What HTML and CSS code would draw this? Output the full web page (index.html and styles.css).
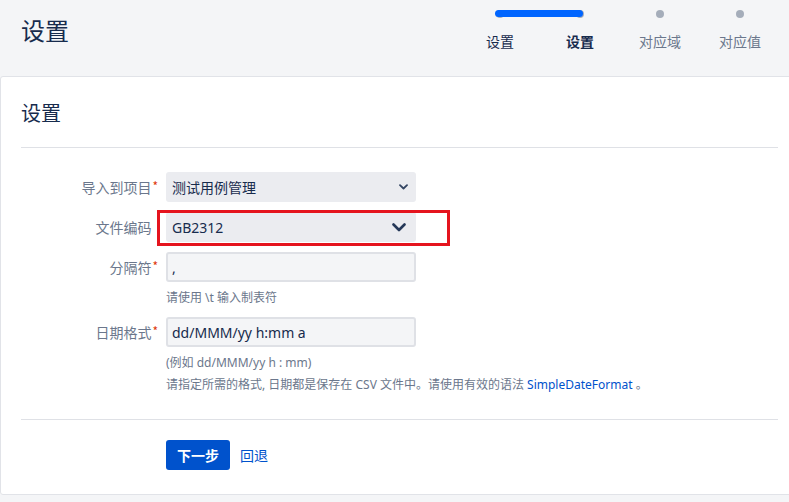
FILE: index.html
```html
<!DOCTYPE html>
<html lang="zh">
<head>
<meta charset="utf-8">
<link rel="stylesheet" href="styles.css">
</head>
<body>
<header class="top">
  <h1 class="page-title">设置</h1>
  <ol class="steps">
    <li class="step done"><span class="dot"></span><span class="step-label">设置</span></li>
    <li class="step current"><span class="dot"></span><span class="step-label">设置</span></li>
    <li class="step todo"><span class="dot"></span><span class="step-label">对应域</span></li>
    <li class="step todo"><span class="dot"></span><span class="step-label">对应值</span></li>
    <span class="progress"></span>
  </ol>
</header>
<main class="panel">
  <h2 class="panel-title">设置</h2>
  <hr class="sep">
  <form class="form">
    <div class="row">
      <label class="lbl">导入到项目<span class="req">*</span></label>
      <div class="select small"><span>测试用例管理</span>
        <svg class="chev-s" width="9" height="6" viewBox="0 0 9 6"><path d="M1 1.2 L4.5 4.5 L8 1.2" fill="none" stroke="#344563" stroke-width="1.8" stroke-linecap="round" stroke-linejoin="round"/></svg>
      </div>
    </div>
    <div class="row highlight-row">
      <label class="lbl">文件编码<span class="req hidden">*</span></label>
      <div class="select"><span>GB2312</span>
        <svg class="chev-l" width="14" height="9" viewBox="0 0 14 9"><path d="M1.5 1.5 L7 7 L12.5 1.5" fill="none" stroke="#253858" stroke-width="2.6" stroke-linecap="round" stroke-linejoin="round"/></svg>
      </div>
      <span class="mark"></span>
    </div>
    <div class="row">
      <label class="lbl">分隔符<span class="req">*</span></label>
      <div class="input">,</div>
    </div>
    <p class="help first">请使用 \t 输入制表符</p>
    <div class="row date-row">
      <label class="lbl">日期格式<span class="req">*</span></label>
      <div class="input">dd/MMM/yy h:mm a</div>
    </div>
    <p class="help example">(例如 dd/MMM/yy h : mm)</p>
    <p class="help note">请指定所需的格式, 日期都是保存在 CSV 文件中。请使用有效的语法 <a class="link">SimpleDateFormat</a> 。</p>
  </form>
  <hr class="sep bottom">
  <div class="actions">
    <button class="btn-primary" type="button">下一步</button>
    <a class="link back">回退</a>
  </div>
</main>
</body>
</html>
```
FILE: styles.css
```css
* { box-sizing: border-box; }
html, body {
  margin: 0;
  padding: 0;
  background: #f4f5f7;
  font-family: "Noto Sans", "Noto Sans CJK SC", sans-serif;
  color: #172b4d;
  overflow: hidden;
}
.top {
  height: 76px;
  display: flex;
  align-items: flex-start;
  padding-left: 21px;
}
.page-title {
  margin: 16px 0 0 0;
  font-size: 24px;
  line-height: 28px;
  font-weight: 400;
  color: #172b4d;
  font-family: "Noto Sans CJK SC", sans-serif;
}
.steps {
  list-style: none;
  margin: 0 9px 0 auto;
  padding: 0;
  display: flex;
  position: relative;
}
.step {
  width: 80px;
  display: flex;
  flex-direction: column;
  align-items: center;
  padding-top: 10px;
}
.dot {
  width: 8px;
  height: 8px;
  border-radius: 50%;
  background: #a5adba;
}
.step-label {
  margin-top: 13px;
  font-size: 14px;
  line-height: 20px;
  font-family: "Noto Sans CJK SC", sans-serif;
  color: #6b778c;
}
.step.done .step-label { color: #172b4d; }
.step.current .step-label { color: #172b4d; font-weight: 700; }
.progress {
  position: absolute;
  left: 35px;
  top: 10px;
  width: 88px;
  height: 7px;
  border-radius: 4px;
  background: #0065ff;
}
.panel {
  background: #fff;
  border: 1px solid #e1e3e8;
  border-radius: 3px;
  margin-right: -10px;
  height: 419px;
  padding: 22px 20px 0 20px;
}
.panel-title {
  margin: 0;
  font-size: 20px;
  line-height: 28px;
  font-weight: 400;
  font-family: "Noto Sans CJK SC", sans-serif;
  color: #172b4d;
}
.sep {
  border: 0;
  border-top: 1px solid #dfe1e6;
  margin: 20px 0 0 0;
}
.form {
  margin-top: 24px;
  padding-left: 0;
}
.row {
  display: flex;
  align-items: center;
  height: 30px;
  margin-bottom: 10px;
  position: relative;
}
.lbl {
  width: 145px;
  padding-right: 8px;
  text-align: right;
  font-size: 14px;
  color: #6b778c;
  font-family: "Noto Sans CJK SC", sans-serif;
  white-space: nowrap;
}
.req { color: #de350b; font-size: 12px; vertical-align: 2px; margin-left: 1px; }
.req.hidden { visibility: hidden; }
.select, .input {
  width: 250px;
  height: 30px;
  border-radius: 3px;
  display: flex;
  align-items: center;
  padding-left: 6px;
  font-size: 14px;
  color: #172b4d;
}
.select {
  background: #ebecf0;
  justify-content: space-between;
  padding-right: 8px;
}
.select span { font-family: "Noto Sans", "Noto Sans CJK SC", sans-serif; }
.chev-l { margin-right: 2px; }
.input {
  background: #f4f5f7;
  border: 2px solid #dfe1e6;
  padding-left: 4px;
}
.mark {
  position: absolute;
  left: 136px;
  top: -2px;
  width: 293px;
  height: 36px;
  border: 3px solid #e5141e;
}
.help {
  margin: 0 0 0 145px;
  font-size: 12px;
  line-height: 20px;
  color: #6b778c;
  font-family: "Noto Sans", "Noto Sans CJK SC", sans-serif;
}
.help.first { margin-top: -4px; }
.help.example { margin-top: 2px; }
.help.note { margin-top: 2px; }
.date-row { margin-top: 9px; margin-bottom: 6px; }
.link { color: #0052cc; text-decoration: none; cursor: pointer; }
.sep.bottom { margin-top: 24px; }
.actions {
  margin-top: 20px;
  padding-left: 145px;
  display: flex;
  align-items: center;
  gap: 10px;
}
.btn-primary {
  width: 64px;
  height: 30px;
  border: 0;
  border-radius: 3px;
  background: #0052cc;
  color: #fff;
  font-size: 14px;
  font-weight: 700;
  font-family: "Noto Sans CJK SC", sans-serif;
  padding: 0;
}
.back { font-size: 14px; font-family: "Noto Sans CJK SC", sans-serif; }
```
